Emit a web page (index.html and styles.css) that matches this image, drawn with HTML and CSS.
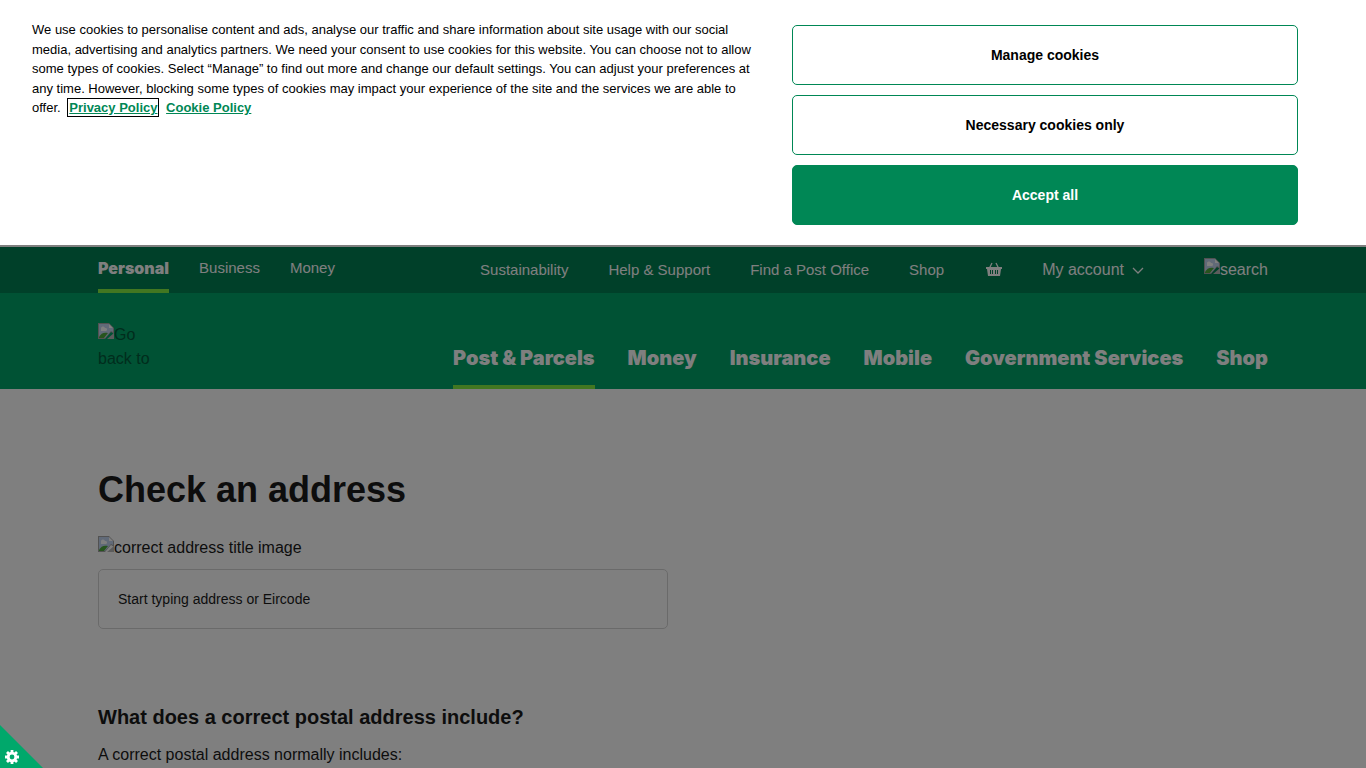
FILE: index.html
```html
<!DOCTYPE html>
<html lang="en">
<head>
    <meta charset="UTF-8">
    <meta name="viewport" content="width=device-width, initial-scale=1.0">
    <title>Check an address</title>
    <link rel="stylesheet" href="styles.css">
</head>
<body>

    <!-- icon shared by the images that have no file -->
    <svg class="sprite" aria-hidden="true">
        <symbol id="missing" viewBox="0 0 16 16">
            <path d="M0 0h11l5 5v6l-3-2-6 7H0z" fill="#a5a5a5"/>
            <path d="M1 1h10v4h4v4l-2-1-6 7H1z" fill="#c3d4f0"/>
            <path d="M11 1v4h4z" fill="#fff"/>
            <path d="M3 6a2 2 0 0 1 4-1 1.500 1.500 0 0 1 1 3H3z" fill="#fff"/>
            <path d="M1 14c2-4 5-5 9-4l-4 5H1z" fill="#4fa83d"/>
            <path d="M16 10v6H9z" fill="#b9b9b9"/>
        </symbol>
    </svg>

    <div class="cookie-banner">
        <p class="cookie-text">We use cookies to personalise content and ads, analyse our traffic and share information about site usage with our social media, advertising and analytics partners. We need your consent to use cookies for this website. You can choose not to allow some types of cookies. Select “Manage” to find out more and change our default settings. You can adjust your preferences at any time. However, blocking some types of cookies may impact your experience of the site and the services we are able to offer. <a href="#" class="focused">Privacy Policy</a> <a href="#">Cookie Policy</a></p>
        <div class="cookie-buttons">
            <button type="button">Manage cookies</button>
            <button type="button">Necessary cookies only</button>
            <button type="button" class="accept">Accept all</button>
        </div>
    </div>

    <div class="page">
        <div class="topbar">
            <div class="container">
                <nav class="segments">
                    <a href="#" class="active">Personal</a>
                    <a href="#">Business</a>
                    <a href="#">Money</a>
                </nav>
                <nav class="utility">
                    <a href="#">Sustainability</a>
                    <a href="#">Help &amp; Support</a>
                    <a href="#">Find a Post Office</a>
                    <a href="#">Shop</a>
                    <a href="#" class="basket" aria-label="Basket">
                        <svg width="16" height="16" viewBox="0 0 16 16">
                            <path d="M3.500 6 6 1M12.500 6 10 1" stroke="currentColor" stroke-width="1.300" fill="none"/>
                            <path fill="currentColor" fill-rule="evenodd" d="M0 5h16v2h-1l-1 7H2L1 7H0zM4 8v4h1V8zM6 8v4h1V8zM9 8v4h1V8zM11 8v4h1V8z"/>
                        </svg>
                    </a>
                    <a href="#" class="account">My account
                        <svg width="12" height="12" viewBox="0 0 12 12"><path d="M1 4l5 5 5-5" fill="none" stroke="currentColor" stroke-width="1.300"/></svg>
                    </a>
                    <a href="#" class="search"><svg class="missing"><use href="#missing"/></svg>search</a>
                </nav>
            </div>
        </div>

        <header class="header">
            <div class="container">
                <a href="#" class="logo"><svg class="missing"><use href="#missing"/></svg>Go back to</a>
                <nav class="main-nav">
                    <a href="#" class="active">Post &amp; Parcels</a>
                    <a href="#">Money</a>
                    <a href="#">Insurance</a>
                    <a href="#">Mobile</a>
                    <a href="#">Government Services</a>
                    <a href="#">Shop</a>
                </nav>
            </div>
        </header>

        <main class="content">
            <h1>Check an address</h1>
            <label for="address"><svg class="missing"><use href="#missing"/></svg>correct address title image</label>
            <input type="text" id="address" placeholder="Start typing address or Eircode">
            <h2>What does a correct postal address include?</h2>
            <p>A correct postal address normally includes:</p>
        </main>
    </div>

    <button type="button" class="cookie-settings" aria-label="Cookie settings">
        <svg width="14" height="14" viewBox="0 0 14 14">
            <circle cx="7" cy="7" r="3.800" fill="none" stroke="#fff" stroke-width="2.800"/>
            <path d="M7 0v3M7 11v3M0 7h3M11 7h3M2 2l2 2M10 10l2 2M12 2l-2 2M4 10l-2 2" stroke="#fff" stroke-width="2.800"/>
        </svg>
    </button>

</body>
</html>
```
FILE: styles.css
```css
* {
    box-sizing: border-box;
}
body {
    margin: 0;
    height: 100vh;
    display: flex;
    flex-direction: column;
    overflow: hidden;
    font-family: "Liberation Sans", Arial, sans-serif;
    font-size: 16px;
    line-height: 24px;
    color: #1a1a1a;
}
a {
    color: inherit;
    text-decoration: none;
}
.sprite {
    display: none;
}
.missing {
    width: 16px;
    height: 16px;
    vertical-align: 1px;
}

/* Cookie banner */
.cookie-banner {
    flex: none;
    display: flex;
    justify-content: space-between;
    padding: 20px 68px 20px 32px;
    background: #fff;
}
.cookie-text {
    width: 57%;
    max-width: 722px;
    margin: 0;
    font-size: 13px;
    line-height: 1.5;
    color: #000;
}
.cookie-text a {
    margin-left: 5px;
    font-weight: bold;
    color: #008755;
    text-decoration: underline;
}
.cookie-text .focused {
    outline: 1px solid #000;
    outline-offset: 1px;
}
.cookie-buttons {
    width: 40%;
    max-width: 506px;
    display: flex;
    flex-direction: column;
    gap: 10px;
    padding-top: 5px;
}
.cookie-buttons button {
    height: 60px;
    border: 1px solid #008755;
    border-radius: 5px;
    background: #fff;
    color: #000;
    font: bold 14px "Liberation Sans", Arial, sans-serif;
}
.cookie-buttons .accept {
    background: #008755;
    color: #fff;
}

/* Page under the dark layer */
.page {
    position: relative;
    flex: 1;
    min-height: 0;
    padding-top: 2px;
    background: #fff;
    overflow: hidden;
}
.page::after {
    content: "";
    position: absolute;
    inset: 0;
    background: rgba(0, 0, 0, 0.5);
}
.container {
    display: flex;
    justify-content: space-between;
    max-width: 1170px;
    margin: 0 auto;
}
.topbar {
    background: #008053;
    color: #fff;
}
.topbar .container {
    height: 46px;
}
.segments,
.utility,
.main-nav {
    display: flex;
}
.segments {
    gap: 30px;
    font-size: 15px;
}
.segments a {
    padding-top: 9px;
    border-bottom: 4px solid transparent;
}
.segments .active,
.main-nav .active {
    border-bottom-color: #84ee42;
}
.segments .active {
    font-family: Inter, "Liberation Sans", sans-serif;
    font-size: 16px;
    font-weight: 900;
}
.utility {
    align-items: center;
    gap: 40px;
    font-size: 15px;
}
.basket,
.account {
    display: flex;
    align-items: center;
    gap: 8px;
}
.basket {
    padding-left: 2px;
}
.account,
.search {
    font-size: 16px;
}
.search {
    margin-left: 20px;
}
.header {
    background: #00a468;
}
.header .container {
    height: 96px;
}
.logo {
    width: 60px;
    padding-top: 30px;
    color: #005a3a;
}
.main-nav {
    gap: 33px;
    font-family: Inter, "Liberation Sans", sans-serif;
    font-size: 20px;
    font-weight: 900;
    color: #fff;
}
.main-nav a {
    padding-top: 53px;
    border-bottom: 4px solid transparent;
}

.content {
    max-width: 1170px;
    margin: 0 auto;
    padding-top: 77px;
}
h1 {
    margin: 0 0 22px;
    font-size: 36px;
    line-height: 48px;
}
label {
    display: block;
    margin-bottom: 9px;
}
input {
    display: block;
    width: 570px;
    max-width: 100%;
    height: 60px;
    padding: 0 19px;
    border: 1px solid #d5d5d5;
    border-radius: 5px;
    background: #fff;
    font: 14px "Liberation Sans", Arial, sans-serif;
}
input::placeholder {
    color: #1a1a1a;
}
h2 {
    margin: 76px 0 14px;
    font-size: 20px;
    line-height: 24px;
}
p {
    margin: 0;
}

/* Corner button */
.cookie-settings {
    position: fixed;
    left: 0;
    bottom: 0;
    width: 43px;
    height: 43px;
    padding: 0 0 4px 5px;
    display: flex;
    align-items: flex-end;
    border: 0;
    background: #00a86b;
    clip-path: polygon(0 0, 100% 100%, 0 100%);
}
```
